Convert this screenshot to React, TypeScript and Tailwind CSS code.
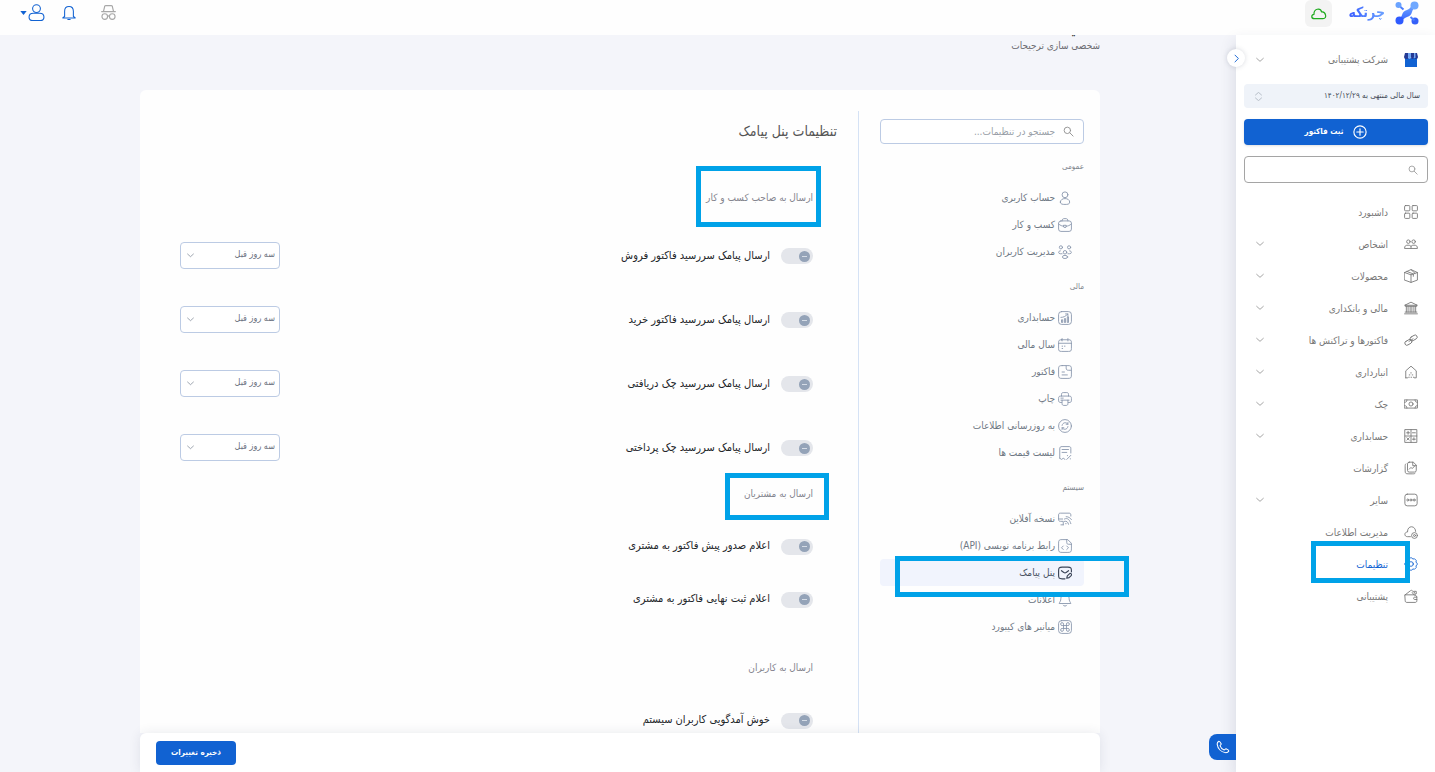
import React from "react";

const iconPaths: Record<string, React.ReactNode> = {
  dashboard: (
    <>
      <rect x="1" y="1" width="9" height="9" rx="1.500" />
      <rect x="14" y="1" width="9" height="9" rx="1.500" />
      <rect x="1" y="14" width="9" height="9" rx="1.500" />
      <rect x="14" y="14" width="9" height="9" rx="1.500" />
    </>
  ),
  people: (
    <>
      <circle cx="7.500" cy="8" r="3" />
      <circle cx="16.500" cy="8" r="3" />
      <path d="M1 19c0-4 2-5 6-5s5 2 5 2 1-2 5-2 6 1 6 5zM12 16v3" />
    </>
  ),
  box: <path d="M1 6 12 1 23 6v13l-11 4L1 19zM1 6l11 4 11-4M12 10v13M5 4.200 16 8.500v4M12 1l7 6.500" />,
  bank: <path d="M2 7 12 2l10 5zM2 7v2h20V7M4 9v10M7 9v10M10.500 9v10M13.500 9v10M17 9v10M20 9v10M2 19h20M1 22h22" />,
  link: (
    <>
      <rect x="10" y="5" width="13" height="7" rx="3.500" transform="rotate(-30 16.500 8.500)" />
      <rect x="1" y="12.500" width="13" height="7" rx="3.500" transform="rotate(-30 7.500 16)" />
      <path d="m8.500 14.500 7-4.500" />
    </>
  ),
  warehouse: <path d="M3 22V10l9-8 9 8v12h-3M3 22h3M8 21h1M12 21h1M16 21h1M9 17h1M14 17h1M12 13v1" />,
  cash: (
    <>
      <path d="M1 5h22v14H1zM1 9c3 0 4-1 4-4M23 9c-3 0-4-1-4-4M1 15c3 0 4 1 4 4M23 15c-3 0-4 1-4 4" />
      <circle cx="12" cy="12" r="3.500" />
    </>
  ),
  calculator: <path d="M2 1h20v22H2zM12 1v22M2 12h20M7 4v5M4.500 6.500h5M14.500 6.500h5M5 15l4 4M9 15l-4 4M17 15v4M14.500 17.500h5" />,
  report: (
    <>
      <path d="M9 2h7l5 5v9a3 3 0 0 1-3 3H9a3 3 0 0 1-3-3V5a3 3 0 0 1 3-3zM15 2v6h6" />
      <path d="M3 5c-1 1-1 2-1 4v8c0 4 1 5 5 5h8c2 0 3 0 4-1M9 14l3-3 2 2 4-4" />
    </>
  ),
  more: (
    <>
      <rect x="1.500" y="2" width="21" height="20" rx="4" />
      <circle cx="6.500" cy="12" r="1.700" />
      <circle cx="12" cy="12" r="1.700" />
      <circle cx="17.500" cy="12" r="1.700" />
    </>
  ),
  cloudGear: (
    <>
      <path d="M11 20H6c-6 0-6-8 0-8 0-6 3-9 7-9s7 4 7 8" />
      <circle cx="18" cy="18" r="5" />
      <circle cx="18" cy="18" r="1.700" />
    </>
  ),
  gear: (
    <>
      <path d="M10 2c1-1 3-1 4 0l1 1.500 3-.5 3 3-.5 3L22 10c1 1 1 3 0 4l-1.500 1 .5 3-3 3-3-.5-1 1.500c-1 1-3 1-4 0l-1-1.500L6 21l-3-3 .5-3L2 14c-1-1-1-3 0-4l1.500-1L3 6l3-3 3 .5z" />
      <circle cx="12" cy="12" r="4" />
    </>
  ),
  support: <path d="M2 10h14c3 0 6 1 6 4v6c0 2-1 3-3 3H5c-2 0-3-1-3-3zM2 10l9-7c1-1 2-1 3 0l5 4v4M22 14h-4c-2 0-2 4 0 4h4M14 6l3 4M17 4h4v4" />,
  user: (
    <>
      <circle cx="12" cy="6.500" r="5" />
      <path d="M4 19c0-4 4-6 8-6s8 2 8 6-4 4-8 4-8 0-8-4z" />
    </>
  ),
  account: (
    <>
      <circle cx="12" cy="6.500" r="5.500" />
      <path d="M7.500 13h9c4 0 6 2 6 5.500s-1 5-5 5h-11c-4 0-5-1.500-5-5s2-5.500 6-5.500z" />
    </>
  ),
  briefcase: (
    <>
      <rect x="1" y="5" width="22" height="18" rx="4" />
      <path d="M7 5c0-3 1-4 5-4s5 1 5 4M1 10c3 3 6 4 9 4M23 10c-3 3-6 4-9 4M10 12.500h4v3l-2 1-2-1z" />
    </>
  ),
  users: (
    <>
      <circle cx="5" cy="4" r="2.700" />
      <circle cx="19" cy="4" r="2.700" />
      <circle cx="12" cy="12.500" r="3" />
      <path d="M7 15H4c-4 0-4-5 0-5M17 15h3c4 0 4-5 0-5" />
      <ellipse cx="12" cy="20.500" rx="4.500" ry="2.700" />
    </>
  ),
  chart: (
    <>
      <rect x="1" y="1" width="22" height="22" rx="5" />
      <path d="M6 19v-4h2v4zM11 19v-6h2v6zM16 19v-9h2v9zM5 11c5 0 8-2 12-6M13 5h4v4" />
    </>
  ),
  calendar: <path d="M6 3h12c4 0 5 1 5 5v10c0 4-1 5-5 5H6c-4 0-5-1-5-5V8c0-4 1-5 5-5zM1 9h22M7 1v4M17 1v4M7 14h1M11 14h1M7 18h1" />,
  invoice: <path d="M7 1h10c5 0 6 1 6 6v10c0 5-1 6-6 6H7c-5 0-6-1-6-6V7c0-5 1-6 6-6zM14 2v3c0 3 1 4 4 4h4M7 12h4M7 17h9" />,
  printer: <path d="M6 7V4c0-2 1-3 3-3h6c2 0 3 1 3 3v3M6 18H5c-3 0-4-1-4-4v-3c0-3 1-4 4-4h14c3 0 4 1 4 4v3c0 3-1 4-4 4h-1M5 14h14M7 14v6c0 2 1 3 3 3h4c2 0 3-1 3-3v-6M5 10.500h4" />,
  refresh: (
    <>
      <circle cx="12" cy="12" r="11" />
      <path d="M7 11c1-6 8-6 10-2M17 6v3h-3M17 13c-1 6-8 6-10 2M7 18v-3h3" />
    </>
  ),
  priceList: <path d="M3 21V5c0-3 1-4 4-4h12c2 0 3 1 3 3v8M7 6h11M7 11h8M3 21l3 2 3-2 3 2M15 23l7-7M16 16.500h.5M21 22h.5" />,
  offline: <path d="M22 7V5c0-2-1-3-3-3H4C2 2 1 3 1 5v8c0 2 1 3 3 3h5v6M5 22h4M1 12h7M11 12c6-3 9 2 11 8M11 16c4-1 6 1 7 5M13 20h1M14 8c4 0 7 2 9 5" />,
  api: <path d="M16 1H7C2 1 1 2 1 7v10c0 5 1 6 6 6h10c5 0 6-1 6-6V8zM15 1v5c0 2 1 3 3 3h5M9 12l-3 3 3 3M15 12l3 3-3 3" />,
  sms: <path d="M12 22H7c-5 0-6-1-6-6V8c0-5 1-6 6-6h10c5 0 6 1 6 6v2M6 8l4 3c1 1 3 1 4 0l4-3M15 21l1-4 4-4c2-1 4 1 3 3l-4 4z" />,
  bell: <path d="M12 2c-5 0-7 3-7 7 0 5-2 6-3 9h20c-1-3-3-4-3-9 0-4-2-7-7-7zM9 21c1 2 5 2 6 0" />,
  notification: <path d="M12 1C7 1 4.500 4 4.500 9v9L1.500 20v.500h21V20l-3-2V9c0-5-2.500-8-7.500-8zM10 23.300h4" />,
  keyboard: (
    <>
      <rect x="1" y="1" width="22" height="22" rx="5" />
      <path d="M9.500 9.500V7A2.500 2.500 0 1 0 7 9.500h10A2.500 2.500 0 1 0 14.500 7v10a2.500 2.500 0 1 0 2.500-2.500H7A2.500 2.500 0 1 0 9.500 17z" />
    </>
  ),
  search: (
    <>
      <circle cx="9.500" cy="9.500" r="7" />
      <path d="m15 15 7 7" />
    </>
  ),
  incognito: (
    <>
      <path d="M4 10 6 2q0-1 2-1h8q2 0 2 1l2 8M1 10.500h22" />
      <circle cx="6" cy="18.500" r="4.500" />
      <circle cx="18" cy="18.500" r="4.500" />
      <path d="M10.500 18c1-1 2-1 3 0" />
    </>
  ),
  down: <path d="m2 7 10 9 10-9" />,
  right: <path d="m8 3 9 9-9 9" />,
  updown: <path d="m4 8 8-7 8 7M4 16l8 7 8-7" />,
  plus: (
    <>
      <circle cx="12" cy="12" r="10.500" />
      <path d="M12 6.500v11M6.500 12h11" />
    </>
  ),
  cloud: <path d="M5 19c-5 0-5-6-.5-6.500C4 4 14 2 16 9c6-1 9 10 2 10z" />,
  phone: <path d="M5 2c-2 1-3 3-3 5 1 8 7 14 15 15 2 0 4-1 5-3 0-2-3-3-5-4-1 0-2 2-3 2-3-1-6-4-7-7 0-1 2-2 2-3C8 5 7 2 5 2z" />,
};

function Icon({ name, className, weight = 1.5 }: { name: string; className: string; weight?: number }) {
  return (
    <svg
      viewBox="0 0 24 24"
      fill="none"
      stroke="currentColor"
      strokeWidth={weight}
      strokeLinecap="round"
      strokeLinejoin="round"
      aria-hidden="true"
      className={`shrink-0 ${className}`}
    >
      {iconPaths[name]}
    </svg>
  );
}

const Highlight = ({ className }: { className: string }) => (
  <span aria-hidden="true" className={`pointer-events-none absolute z-10 border-5 border-[#00a2e8] ${className}`} />
);

const menu = [
  { label: "داشبورد", icon: "dashboard" },
  { label: "اشخاص", icon: "people", sub: true },
  { label: "محصولات", icon: "box", sub: true },
  { label: "مالی و بانکداری", icon: "bank", sub: true },
  { label: "فاکتورها و تراکنش ها", icon: "link", sub: true },
  { label: "انبارداری", icon: "warehouse", sub: true },
  { label: "چک", icon: "cash", sub: true },
  { label: "حسابداری", icon: "calculator", sub: true },
  { label: "گزارشات", icon: "report" },
  { label: "سایر", icon: "more", sub: true },
  { label: "مدیریت اطلاعات", icon: "cloudGear" },
  { label: "تنظیمات", icon: "gear", active: true },
  { label: "پشتیبانی", icon: "support" },
];

const settingGroups = [
  {
    title: "عمومی",
    items: [
      { label: "حساب کاربری", icon: "user" },
      { label: "کسب و کار", icon: "briefcase" },
      { label: "مدیریت کاربران", icon: "users" },
    ],
  },
  {
    title: "مالی",
    items: [
      { label: "حسابداری", icon: "chart" },
      { label: "سال مالی", icon: "calendar" },
      { label: "فاکتور", icon: "invoice" },
      { label: "چاپ", icon: "printer" },
      { label: "به روزرسانی اطلاعات", icon: "refresh" },
      { label: "لیست قیمت ها", icon: "priceList" },
    ],
  },
  {
    title: "سیستم",
    items: [
      { label: "نسخه آفلاین", icon: "offline" },
      { label: "رابط برنامه نویسی (API)", icon: "api" },
      { label: "پنل پیامک", icon: "sms", active: true },
      { label: "اعلانات", icon: "bell" },
      { label: "میانبر های کیبورد", icon: "keyboard" },
    ],
  },
];

const ownerOptions = [
  "ارسال پیامک سررسید فاکتور فروش",
  "ارسال پیامک سررسید فاکتور خرید",
  "ارسال پیامک سررسید چک دریافتی",
  "ارسال پیامک سررسید چک پرداختی",
];

function Toggle({ label }: { label: string }) {
  return (
    <label className="flex cursor-pointer items-center gap-[11px] text-[11px] text-[#222529]">
      <input type="checkbox" role="switch" className="peer sr-only" />
      <span className="flex h-4 w-8 items-center rounded-full bg-[#e4e6eb] px-[3px] peer-checked:justify-end peer-focus-visible:ring-2">
        <span className="flex size-[11px] items-center justify-center rounded-full bg-[#94a3b8]">
          <span className="h-px w-[5px] bg-[#d5dce6]" />
        </span>
      </span>
      {label}
    </label>
  );
}

function DaySelect({ label }: { label: string }) {
  return (
    <div className="relative pb-0.5">
      <select
        aria-label={label}
        className="block h-[27px] w-[100px] appearance-none rounded-[4px] border border-[#bccbe4] bg-white pr-1 pl-5 text-[9px] text-[#6b7280]"
      >
        <option>سه روز قبل</option>
      </select>
      <Icon name="down" className="pointer-events-none absolute top-[10px] left-[7px] size-[7px] text-[#7c8694]" weight={2.500} />
    </div>
  );
}

function SectionTitle({ children }: { children: React.ReactNode }) {
  return <h3 className="relative mb-[13px] flex h-[27px] items-center self-start text-[10px] text-[#85858f]">{children}</h3>;
}

function Header() {
  return (
    <header className="flex h-[35px] shrink-0 items-start justify-between bg-[#fefefe] pr-4 pl-5">
      <div className="flex items-start">
        <a href="#" aria-label="چرتکه" className="flex items-start gap-[10px]">
          <svg viewBox="0 0 24 24" className="mt-[1px] size-6" aria-hidden="true">
            <defs>
              <linearGradient id="mark" x1="0" y1="0" x2="0" y2="1">
                <stop offset="0" stopColor="#74acff" />
                <stop offset="1" stopColor="#2f5bff" />
              </linearGradient>
            </defs>
            <path d="M17 3c-1 3-2 5-5 6s-4 2-5 5-2 3-5 4l5 4c0-3 2-5 5-6s4-2 5-5 2-4 6-5z" fill="url(#mark)" />
            <circle cx="3.500" cy="4" r="3" fill="#6aa3ff" />
            <circle cx="19.500" cy="4.500" r="4" fill="#6fa8ff" />
            <circle cx="4.500" cy="19.500" r="4" fill="#2f5bff" />
            <circle cx="20" cy="20" r="3.500" fill="#3560f8" />
            <path d="m5.500 6 3 2.500M15.500 16l4 3.500" stroke="#4a7dff" strokeWidth="2" />
          </svg>
          <span className="bg-linear-to-l from-[#6ba0ff] to-[#3d5cff] bg-clip-text text-[14px] leading-[25px] font-bold text-transparent">چرتکه</span>
        </a>
        <button aria-label="وضعیت اتصال" className="mr-4 flex h-[27px] w-[27px] items-center justify-center rounded-md bg-[#f3f3f3] text-[#1faa1f]">
          <Icon name="cloud" className="size-[16px]" weight={1.800} />
        </button>
      </div>
      <div className="flex items-center pt-1">
        <button aria-label="حالت ناشناس" className="ml-[25px] text-[#a8a8a8]">
          <Icon name="incognito" className="size-[15px]" weight={1.800} />
        </button>
        <button aria-label="اعلان ها" className="ml-[17px] text-[#1162d2]">
          <Icon name="notification" className="size-[14px]" weight={1.800} />
        </button>
        <button aria-label="حساب کاربری" className="flex items-center gap-px text-[#1162d2]">
          <Icon name="account" className="size-[17px]" />
          <svg viewBox="0 0 8 5" className="h-[4px] w-[7px]" aria-hidden="true">
            <path d="M0 0h8L4 5z" fill="currentColor" />
          </svg>
        </button>
      </div>
    </header>
  );
}

function Sidebar() {
  return (
    <aside className="relative z-20 flex w-[199px] shrink-0 flex-col bg-white shadow-[-2px_6px_14px_rgba(40,50,80,0.12)]">
      <button aria-label="بستن منو" className="absolute top-[14px] -left-[9px] z-20 flex size-[18px] items-center justify-center rounded-full bg-white text-[#1162d2] shadow-[0_0_5px_rgba(40,50,80,0.18)]">
        <Icon name="right" className="size-[9px]" weight={2.500} />
      </button>
      <button className="flex h-[49px] shrink-0 items-center gap-4 pr-[17px] pl-5 text-[10px] text-[#777]">
        <svg viewBox="0 0 14 14" className="size-[14px]" aria-hidden="true">
          <path d="M1 5h12v9H1z" fill="#1162d2" />
          <path d="M1 0h3v6H2Q0 6 0 4zM7 0h3v4q0 2-1.500 2T7 4zM11 0h2l1 4q0 2-2 2h-1z" fill="#243a94" />
          <path d="M4 0h3v4q0 2-1.500 2T4 4zM10 0h1.500v5H10z" fill="#74a6f2" />
        </svg>
        <span className="flex-1 text-right">شرکت پشتیبانی</span>
        <Icon name="down" className="size-[8px]" weight={2} />
      </button>
      <div className="flex flex-col gap-[11px] pr-[7px] pl-2">
        <button className="flex h-6 items-center justify-between rounded-[4px] bg-[#eff3f9] px-2 text-[8px] text-[#444b57]">
          سال مالی منتهی به ۱۴۰۲/۱۲/۲۹
          <Icon name="updown" className="ml-0.5 size-[9px] text-[#8b95a3]" />
        </button>
        <button className="flex h-[26px] items-center justify-center gap-[10px] rounded-[4px] bg-[#1162d2] text-[8px] font-bold text-white shadow-sm">
          <Icon name="plus" className="size-[14px]" weight={2} />
          ثبت فاکتور
        </button>
        <div className="relative">
          <input aria-label="جستجو در منو" className="block h-[27px] w-full rounded-[4px] border border-[#a5a5a5] pr-7 pl-2 text-[10px]" />
          <Icon name="search" className="absolute top-[9px] right-[10px] size-[10px] text-[#999]" weight={2} />
        </div>
      </div>
      <nav className="mt-[13px] flex flex-col">
        {menu.map((m) => (
          <a
            key={m.label}
            href="#"
            className={`relative flex h-8 items-center gap-4 pr-[17px] pl-5 text-[10px] ${m.active ? "text-[#1162d2]" : "text-[#777]"}`}
          >
            <Icon name={m.icon} className="size-[14px]" />
            <span className="flex-1">{m.label}</span>
            {m.sub && <Icon name="down" className="size-[8px]" weight={2} />}
            {m.active && <Highlight className="-top-[7px] right-[25px] h-[42px] w-[99px]" />}
          </a>
        ))}
      </nav>
    </aside>
  );
}

function SettingsNav() {
  return (
    <nav className="mt-[29px] w-[204px] shrink-0">
      <div className="relative mb-[15px]">
        <input
          aria-label="جستجو در تنظیمات"
          placeholder="جستجو در تنظیمات..."
          className="block h-[25px] w-full rounded-[4px] border border-[#bccbe4] bg-white pr-7 pl-2 text-[10px] placeholder:text-[#9a9fa8]"
        />
        <Icon name="search" className="absolute top-[7px] right-[10px] size-[11px] text-[#8f8f8f]" weight={2} />
      </div>
      <div className="flex flex-col gap-[14px]">
        {settingGroups.map((g) => (
          <section key={g.title}>
            <h3 className="mb-[9px] text-[8px] leading-4 text-[#80858d]">{g.title}</h3>
            {g.items.map((i) => (
              <a
                key={i.label}
                href="#"
                className={`relative flex h-[27px] items-center gap-[3px] rounded-[4px] pr-3 text-[10px] ${
                  i.active ? "bg-[#f1f4fd] text-[#4a5363]" : "text-[#6f7884]"
                }`}
              >
                <Icon name={i.icon} className={`size-[14px] ${i.active ? "text-[#3c4659]" : "text-[#8795ab]"}`} weight={i.active ? 2 : 1.500} />
                {i.label}
                {i.active && <Highlight className="-top-[3px] -right-[45px] h-[41px] w-[234px]" />}
              </a>
            ))}
          </section>
        ))}
      </div>
    </nav>
  );
}

function SmsSettings() {
  return (
    <section className="mt-[21px] flex min-w-0 flex-1 flex-col border-r border-[#d5e2f5] pr-[21px] pb-10 pl-10">
      <h2 className="text-[14px] leading-10 text-[#555]">تنظیمات پنل پیامک</h2>
      <div className="mt-[33px] flex flex-col pr-6">
        <SectionTitle>
          ارسال به صاحب کسب و کار
          <Highlight className="-top-[18px] -right-2 h-[61px] w-[125px]" />
        </SectionTitle>
        {ownerOptions.map((o) => (
          <div key={o} className="flex h-16 items-center justify-between">
            <Toggle label={o} />
            <DaySelect label={o} />
          </div>
        ))}
        <SectionTitle>
          ارسال به مشتریان
          <Highlight className="-top-[7px] -right-4 h-[47px] w-[104px]" />
        </SectionTitle>
        {["اعلام صدور پیش فاکتور به مشتری", "اعلام ثبت نهایی فاکتور به مشتری"].map((o) => (
          <div key={o} className="flex h-[53px] items-center">
            <Toggle label={o} />
          </div>
        ))}
        <div className="mt-7 flex flex-col">
          <SectionTitle>ارسال به کاربران</SectionTitle>
          <div className="flex h-[53px] items-center">
            <Toggle label="خوش آمدگویی کاربران سیستم" />
          </div>
        </div>
      </div>
    </section>
  );
}

export default function App() {
  return (
    <div
      dir="rtl"
      lang="fa"
      className="flex h-screen flex-col overflow-hidden bg-[#f4f5fa] font-['DejaVu_Sans_Condensed','DejaVu_Sans',sans-serif]"
    >
      <Header />
      <div className="flex min-h-0 flex-1">
        <Sidebar />
        <main className="relative flex min-w-0 flex-1 flex-col">
          <div className="min-h-0 flex-1 overflow-y-auto pr-[136px] pl-[140px] [scrollbar-width:none]">
            <h1 className="-mt-[15px] text-[15px] leading-[18px] font-bold text-[#222]">تنظیمات</h1>
            <p className="text-[10px] leading-4 text-[#6c6c72]">شخصی سازی ترجیحات</p>
            <div className="mt-9 flex gap-[21px] rounded-t-md bg-[#fefefe] pr-4">
              <SettingsNav />
              <SmsSettings />
            </div>
          </div>
          <footer className="z-10 mr-[136px] ml-[140px] flex h-[39px] shrink-0 items-center justify-end rounded-t-md bg-white px-4 shadow-[0_0_12px_rgba(40,50,80,0.10)]">
            <button className="h-6 w-20 rounded-[4px] bg-[#1162d2] text-[8px] font-bold text-white">ذخیره تغییرات</button>
          </footer>
          <button aria-label="تماس" className="absolute right-0 bottom-3 z-30 flex h-[26px] w-[27px] items-center justify-center rounded-l-lg bg-[#1162d2] text-white">
            <Icon name="phone" className="size-[14px]" weight={1.800} />
          </button>
        </main>
      </div>
    </div>
  );
}
